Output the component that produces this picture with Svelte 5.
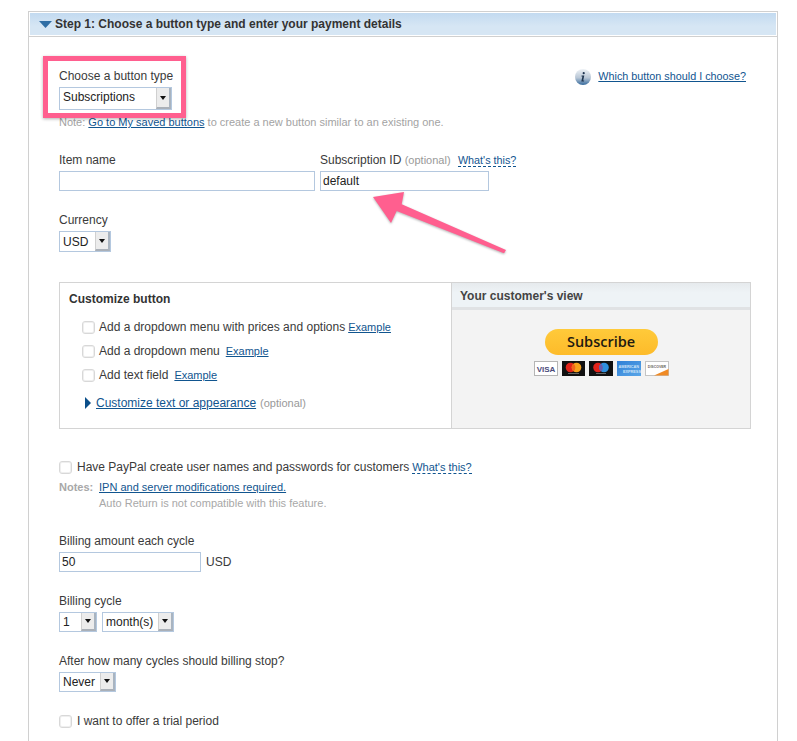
<script>
	const options = [
		{ label: "Add a dropdown menu with prices and options", gap: 3 },
		{ label: "Add a dropdown menu", gap: 6 },
		{ label: "Add text field", gap: 6 }
	];
</script>

{#snippet dropdown(text, width)}
	<div class="select" style="width: {width}px">
		<span class="select-text">{text}</span>
		<span class="select-btn"><i></i></span>
	</div>
{/snippet}

<div class="page">
	<div class="panel">
		<div class="panel-head">
			<svg class="head-arrow" width="13" height="7" viewBox="0 0 13 7"><path d="M0 0h13L6.500 7z" fill="#2f6ea5" /></svg>
			<h2>Step 1: Choose a button type and enter your payment details</h2>
		</div>

		<div class="panel-body">
			<div class="type-row">
				<div>
					<div class="label">Choose a button type</div>
					{@render dropdown("Subscriptions", 113)}
				</div>
				<div class="which">
					<svg width="16" height="16" viewBox="0 0 16 16">
						<defs>
							<linearGradient id="ball" x1="0" y1="0" x2="0" y2="1">
								<stop offset="0" stop-color="#eef2f6" />
								<stop offset="0.55" stop-color="#b9c7d6" />
								<stop offset="1" stop-color="#34699c" />
							</linearGradient>
						</defs>
						<circle cx="8" cy="8" r="8" fill="url(#ball)" />
						<circle cx="8.700" cy="4.200" r="1.100" fill="#1f3550" />
						<path d="M6.600 6.600h2.700l-1.100 5h1l-.2.900H6.300l1.100-5h-1z" fill="#1f3550" />
					</svg>
					<a href="#which">Which button should I choose?</a>
				</div>
			</div>

			<p class="note">Note: <a href="#saved">Go to My saved buttons</a> to create a new button similar to an existing one.</p>

			<div class="name-row">
				<div>
					<div class="label">Item name</div>
					<div class="input item-input"></div>
				</div>
				<div>
					<div class="label">Subscription ID <span class="optional">(optional)</span> <a class="dashed" href="#id">What's this?</a></div>
					<div class="input sub-input">default</div>
				</div>
			</div>

			<div class="currency">
				<div class="label">Currency</div>
				{@render dropdown("USD", 52)}
			</div>

			<div class="customize">
				<div class="customize-left">
					<h3>Customize button</h3>
					<ul>
						{#each options as opt}
							<li>
								<span class="check"></span>
								<span>{opt.label}</span>
								<a class="small-link" style="margin-left: {opt.gap}px" href="#example">Example</a>
							</li>
						{/each}
					</ul>
					<div class="appearance">
						<svg width="6" height="12" viewBox="0 0 6 12"><path d="M0 0l6 6-6 6z" fill="#0b4f8a" /></svg>
						<a href="#custom">Customize text or appearance</a>
						<span class="optional">(optional)</span>
					</div>
				</div>
				<div class="customize-right">
					<div class="view-head">Your customer's view</div>
					<div class="preview">
						<div class="sub-btn">Subscribe</div>
						<div class="cards">
							<svg width="24" height="15" viewBox="0 0 24 15">
								<rect x=".5" y=".5" width="23" height="14" fill="#fff" stroke="#b5b5b5" />
								<text x="12" y="10.500" text-anchor="middle" class="visa">VISA</text>
							</svg>
							<svg width="23" height="15" viewBox="0 0 23 15">
								<rect width="23" height="15" fill="#111" />
								<circle cx="8.500" cy="6.500" r="4.800" fill="#e2231a" />
								<circle cx="14.500" cy="6.500" r="4.800" fill="#f6a01a" />
								<path d="M11.500 2.700a4.800 4.800 0 0 1 0 7.600 4.800 4.800 0 0 1 0-7.600z" fill="#f2661b" />
								<rect x="6" y="12" width="11" height="1" fill="#666" />
							</svg>
							<svg width="24" height="15" viewBox="0 0 24 15">
								<rect width="24" height="15" fill="#111" />
								<circle cx="9" cy="6.500" r="4.800" fill="#e2231a" />
								<circle cx="15" cy="6.500" r="4.800" fill="#2f8fdc" />
								<path d="M12 2.700a4.800 4.800 0 0 1 0 7.600 4.800 4.800 0 0 1 0-7.600z" fill="#6b5aa8" />
								<rect x="7" y="12" width="10" height="1" fill="#666" />
							</svg>
							<svg width="24" height="15" viewBox="0 0 24 15">
								<defs>
									<linearGradient id="amex" x1="0" y1="0" x2="1" y2="1">
										<stop offset="0" stop-color="#2f7fd6" />
										<stop offset="1" stop-color="#5aa6e8" />
									</linearGradient>
								</defs>
								<rect width="24" height="15" fill="url(#amex)" />
								<text x="1.500" y="6.500" class="amex">AMERICAN</text>
								<text x="6" y="11.500" class="amex">EXPRESS</text>
							</svg>
							<svg width="24" height="15" viewBox="0 0 24 15">
								<rect x=".5" y=".5" width="23" height="14" fill="#fff" stroke="#c4c4c4" />
								<path d="M9 14.500L23.500 8v6.500z" fill="#f08a24" />
								<text x="12" y="7" text-anchor="middle" class="discover">DISCOVER</text>
							</svg>
						</div>
					</div>
				</div>
			</div>

			<div class="paypal-row">
				<span class="check"></span>
				<span>Have PayPal create user names and passwords for customers</span>
				<a class="dashed small-link" href="#this">What's this?</a>
			</div>
			<div class="notes">
				<b>Notes:</b>
				<div>
					<a href="#ipn">IPN and server modifications required.</a>
					<div class="auto">Auto Return is not compatible with this feature.</div>
				</div>
			</div>

			<div class="billing">
				<div class="label">Billing amount each cycle</div>
				<div class="amount">
					<div class="input amount-input">50</div>
					<span>USD</span>
				</div>
			</div>

			<div class="cycle">
				<div class="label">Billing cycle</div>
				<div class="amount">
					{@render dropdown("1", 38)}
					{@render dropdown("month(s)", 72)}
				</div>
			</div>

			<div class="stop">
				<div class="label">After how many cycles should billing stop?</div>
				{@render dropdown("Never", 57)}
			</div>

			<div class="trial">
				<span class="check"></span>
				<span>I want to offer a trial period</span>
			</div>
		</div>
	</div>

	<!-- pink annotations drawn on top of the screenshot -->
	<div class="pink-box"></div>
	<svg class="pink-arrow" width="160" height="80" viewBox="0 0 160 80">
		<path d="M13 12L44 7 41.700 19.300 146 65 144 68.300 36.700 26 31 38z" fill="#ff5f8f" />
	</svg>
</div>

<style>
	:global(body) {
		background: #fff;
		font-family: "Liberation Sans", Arial, sans-serif;
		font-size: 12px;
		color: #3a3a3a;
	}

	.page {
		position: relative;
		height: 741px;
		padding-top: 11px;
		box-sizing: border-box;
		overflow: hidden;
	}

	a {
		color: #11558f;
		text-decoration: underline;
	}

	.panel {
		margin-left: 28px;
		width: 750px;
		box-sizing: border-box;
		border: 1px solid #d0d0d0;
		height: 800px;
	}

	.panel-head {
		display: flex;
		align-items: center;
		gap: 3px;
		height: 24px;
		padding-left: 9px;
		background: linear-gradient(#c2daf0, #d6e6f4 60%);
		border: 1px solid #fff;
		box-shadow: 0 1px 0 #d0d0d0;
		box-sizing: border-box;
	}

	.panel-head h2 {
		margin: 0;
		font-size: 12px;
		font-weight: bold;
		color: #333;
	}

	.panel-body {
		padding: 32px 27px 0 30px;
	}

	/* line box is taller than the block so the text sits 1px lower */
	.label {
		height: 16px;
		line-height: 17px;
		margin-bottom: 3px;
		white-space: nowrap;
	}

	.type-row {
		display: flex;
		justify-content: space-between;
		align-items: flex-start;
	}

	.which {
		display: flex;
		align-items: flex-start;
		gap: 7px;
		margin: 1px 4px 0 0;
		font-size: 10.800px;
		line-height: 14px;
	}

	.select {
		display: flex;
		align-items: stretch;
		height: 23px;
		box-sizing: border-box;
		border: 1px solid #b4c8df;
		background: #fff;
	}

	.select-text {
		flex: 1;
		padding-left: 3px;
		line-height: 19px;
		color: #222;
	}

	.select-btn {
		display: flex;
		align-items: center;
		justify-content: center;
		width: 15px;
		background: #ececec;
		border-left: 1px solid #d0d0d0;
		border-right: 2px solid #a9b4c0;
		border-bottom: 2px solid #aab0b8;
		box-sizing: border-box;
	}

	.select-btn i {
		border-left: 3.500px solid transparent;
		border-right: 3.500px solid transparent;
		border-top: 4px solid #111;
	}

	.note {
		margin: 5px 0 0;
		font-size: 11px;
		line-height: 15px;
		color: #a3a3a3;
	}

	.name-row {
		display: flex;
		gap: 5px;
		margin-top: 22px;
	}

	.input {
		box-sizing: border-box;
		height: 20px;
		border: 1px solid #b4c8df;
		background: #fff;
		padding-left: 2px;
		line-height: 18px;
		color: #222;
	}

	.item-input {
		width: 256px;
	}

	.sub-input {
		width: 169px;
	}

	.optional {
		color: #999;
		font-size: 11px;
	}

	.dashed {
		margin-left: 4px;
		text-decoration: none;
		border-bottom: 1px dashed #11558f;
		font-size: 10.800px;
	}

	.currency {
		margin-top: 21px;
	}

	.currency .select {
		height: 21px;
	}

	.currency .select-text {
		line-height: 20px;
	}

	.customize {
		display: flex;
		margin-top: 30px;
		width: 692px;
		height: 147px;
		box-sizing: border-box;
		border: 1px solid #d4d4d4;
	}

	.customize-left {
		width: 392px;
		box-sizing: border-box;
		padding: 9px 9px 0;
		border-right: 1px solid #d4d4d4;
	}

	.customize-left h3 {
		margin: 0;
		font-size: 12px;
		line-height: 15px;
		color: #333;
	}

	.customize-left ul {
		list-style: none;
		margin: 12px 0 0;
		padding: 0 0 0 13px;
		display: flex;
		flex-direction: column;
		gap: 8px;
	}

	.customize-left li {
		display: flex;
		align-items: center;
		height: 16px;
	}

	.check {
		flex: none;
		width: 13px;
		height: 13px;
		margin-right: 4px;
		box-sizing: border-box;
		border: 1px solid #d8d8d8;
		border-radius: 3px;
		background: #fff;
		box-shadow: inset 0 0 0 1px #efefef;
	}

	.small-link {
		font-size: 11px;
	}

	.appearance {
		display: flex;
		align-items: center;
		margin: 12px 0 0 16px;
		height: 16px;
	}

	.appearance a {
		margin-left: 5px;
	}

	.appearance .optional {
		margin-left: 4px;
	}

	.customize-right {
		flex: 1;
		display: flex;
		flex-direction: column;
	}

	.view-head {
		height: 27px;
		line-height: 27px;
		box-sizing: border-box;
		padding-left: 8px;
		font-weight: bold;
		color: #444;
		background: linear-gradient(#e6eaed, #eef3f6 40%);
		border-bottom: 3px solid #e0e2e4;
	}

	.preview {
		flex: 1;
		background: #f3f3f3;
		display: flex;
		flex-direction: column;
		align-items: center;
		padding-top: 19px;
	}

	.sub-btn {
		width: 113px;
		height: 26px;
		line-height: 26px;
		border-radius: 13px;
		text-align: center;
		font-family: "Open Sans", sans-serif;
		font-weight: 600;
		font-size: 14.500px;
		color: #1f1a10;
		background: linear-gradient(#ffca3a, #fdbb2a);
	}

	.cards {
		display: flex;
		gap: 4px;
		margin-top: 6px;
	}

	.visa {
		font: bold 8px "Liberation Sans", sans-serif;
		fill: #4a4a7a;
	}

	.amex {
		font: bold 3.800px "Liberation Sans", sans-serif;
		fill: #cfe4f8;
	}

	.discover {
		font: bold 3.500px "Liberation Sans", sans-serif;
		fill: #6a625c;
	}

	.paypal-row {
		display: flex;
		align-items: center;
		margin-top: 30px;
		height: 16px;
	}

	.paypal-row .check {
		margin-right: 5px;
	}

	.paypal-row .dashed {
		margin-left: 3px;
	}

	.notes {
		display: flex;
		gap: 6px;
		margin-top: 4px;
		font-size: 11px;
		line-height: 16px;
		color: #a8a8a8;
	}

	.notes b {
		width: 34px;
	}

	/* these two labels sit 1px higher than the default */
	.billing .label,
	.cycle .label {
		height: 15px;
		line-height: 15px;
	}

	.billing {
		margin-top: 23px;
	}

	.amount {
		display: flex;
		align-items: center;
		gap: 5px;
	}

	.amount-input {
		width: 142px;
	}

	.cycle {
		margin-top: 22px;
	}

	.stop {
		margin-top: 21px;
	}

	.cycle .select,
	.stop .select {
		height: 20px;
	}

	.cycle .select-text,
	.stop .select-text {
		line-height: 19px;
	}

	.trial {
		display: flex;
		align-items: center;
		margin-top: 21px;
		height: 16px;
	}

	.trial .check {
		margin-right: 5px;
	}

	.pink-box {
		position: absolute;
		left: 43px;
		top: 56px;
		width: 143px;
		height: 62px;
		box-sizing: border-box;
		border: 5px solid #ff5f8f;
		box-shadow: 0 1px 3px rgba(0, 0, 0, 0.3);
	}

	.pink-arrow {
		position: absolute;
		left: 360px;
		top: 185px;
		filter: drop-shadow(0 1px 1px rgba(0, 0, 0, 0.3));
	}
</style>
